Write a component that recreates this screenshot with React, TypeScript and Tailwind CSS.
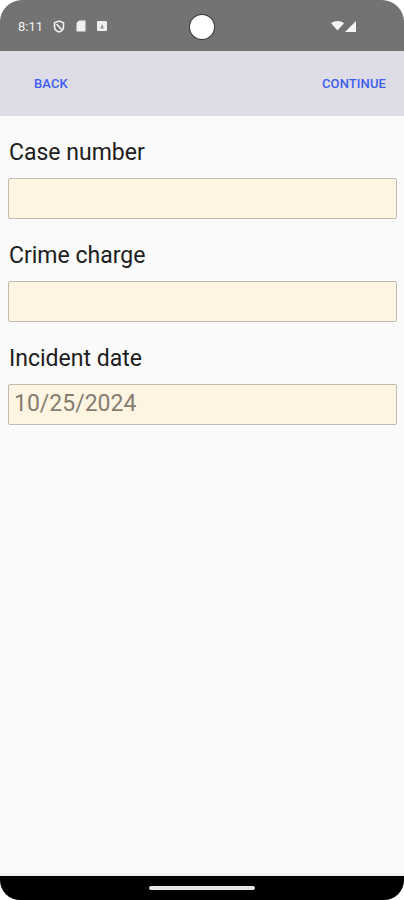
import React from 'react'

const fields = [
  { label: 'Case number', value: '' },
  { label: 'Crime charge', value: '' },
  { label: 'Incident date', value: '10/25/2024' },
]

const StatusBar = () => {
  return (
    <div className="h-[51px] bg-white">
      <div className="relative flex h-full items-center rounded-t-[22px] bg-[#737373] px-[18px] text-[13px] text-[#f0f0f0]">
        <span className="mt-[2px]">8:11</span>
        {/* shield icon */}
        <svg width="12" height="13" viewBox="0 0 12 13" className="ml-[10px] mt-[1px]">
          <path d="M6 1 L10.5 2.8 V6.5 C10.5 9.2 8.5 11.2 6 12 C3.5 11.2 1.5 9.2 1.5 6.5 V2.8 Z" fill="none" stroke="#f0f0f0" strokeWidth="1.6" />
          <path d="M3.5 4 L8.5 9.5" stroke="#f0f0f0" strokeWidth="1.6" />
        </svg>
        {/* sd card */}
        <svg width="10" height="12" viewBox="0 0 10 12" className="ml-[11px] mt-[1px]">
          <path d="M3 0.5 H9.5 V11.5 H0.5 V3 Z" fill="#f0f0f0" />
        </svg>
        {/* image badge */}
        <svg width="10" height="10" viewBox="0 0 10 10" className="ml-[11px] mt-[1px]">
          <rect x="0" y="0" width="10" height="10" rx="1" fill="#f0f0f0" />
          <path d="M3 7.5 L5 3 L7 7.5 Z" fill="#9a9a9a" />
        </svg>
        {/* camera cutout */}
        <div className="absolute left-[190px] top-[15px] h-[24px] w-[24px] rounded-full bg-white shadow-[0_0_0_1px_#3a3a3a]" />
        <div className="ml-auto mr-[30px] mt-[1px] flex items-center">
          <svg width="13" height="10" viewBox="0 0 13 10">
            <path d="M0 2.2 C3.8 -0.7 9.2 -0.7 13 2.2 L6.5 9.5 Z" fill="#f5f5f5" />
          </svg>
          <svg width="11" height="11" viewBox="0 0 11 11" className="ml-[1px]">
            <path d="M11 0 V11 H0 Z" fill="#f5f5f5" />
          </svg>
        </div>
      </div>
    </div>
  )
}

const App = () => {
  return (
    <div
      className="flex h-[900px] w-[404px] flex-col overflow-hidden bg-[#fafafa]"
      style={{ fontFamily: 'Roboto, "Noto Sans", sans-serif' }}
    >
      <StatusBar />

      <div className="flex h-[65px] items-center justify-between bg-[#dddce7] pl-[34px] pr-[18px] text-[13px] font-medium tracking-[0.1px] text-[#3f5ef0]">
        <span>BACK</span>
        <span>CONTINUE</span>
      </div>

      <div className="flex flex-1 flex-col gap-[22px] px-2 pt-[22px]">
        {fields.map((f) => (
          <div key={f.label} className="flex flex-col gap-[10px]">
            <label className="pl-px text-[23px] leading-[30px] text-[#202020]">{f.label}</label>
            <div className="flex h-[41px] w-[389px] items-center rounded-[2px] border-[1.5px] border-[#bfbab2] bg-[#fdf5e2] px-[5px] text-[23px] text-[#857d70]">
              {f.value}
            </div>
          </div>
        ))}
      </div>

      <div className="h-[3px] bg-[#f2f2f2]" />
      <div className="h-[24px] bg-white">
        <div className="flex h-full items-center justify-center rounded-b-[20px] bg-black">
          <div className="h-[4px] w-[106px] rounded-full bg-[#e6e6e6]" />
        </div>
      </div>
    </div>
  )
}

export default App
